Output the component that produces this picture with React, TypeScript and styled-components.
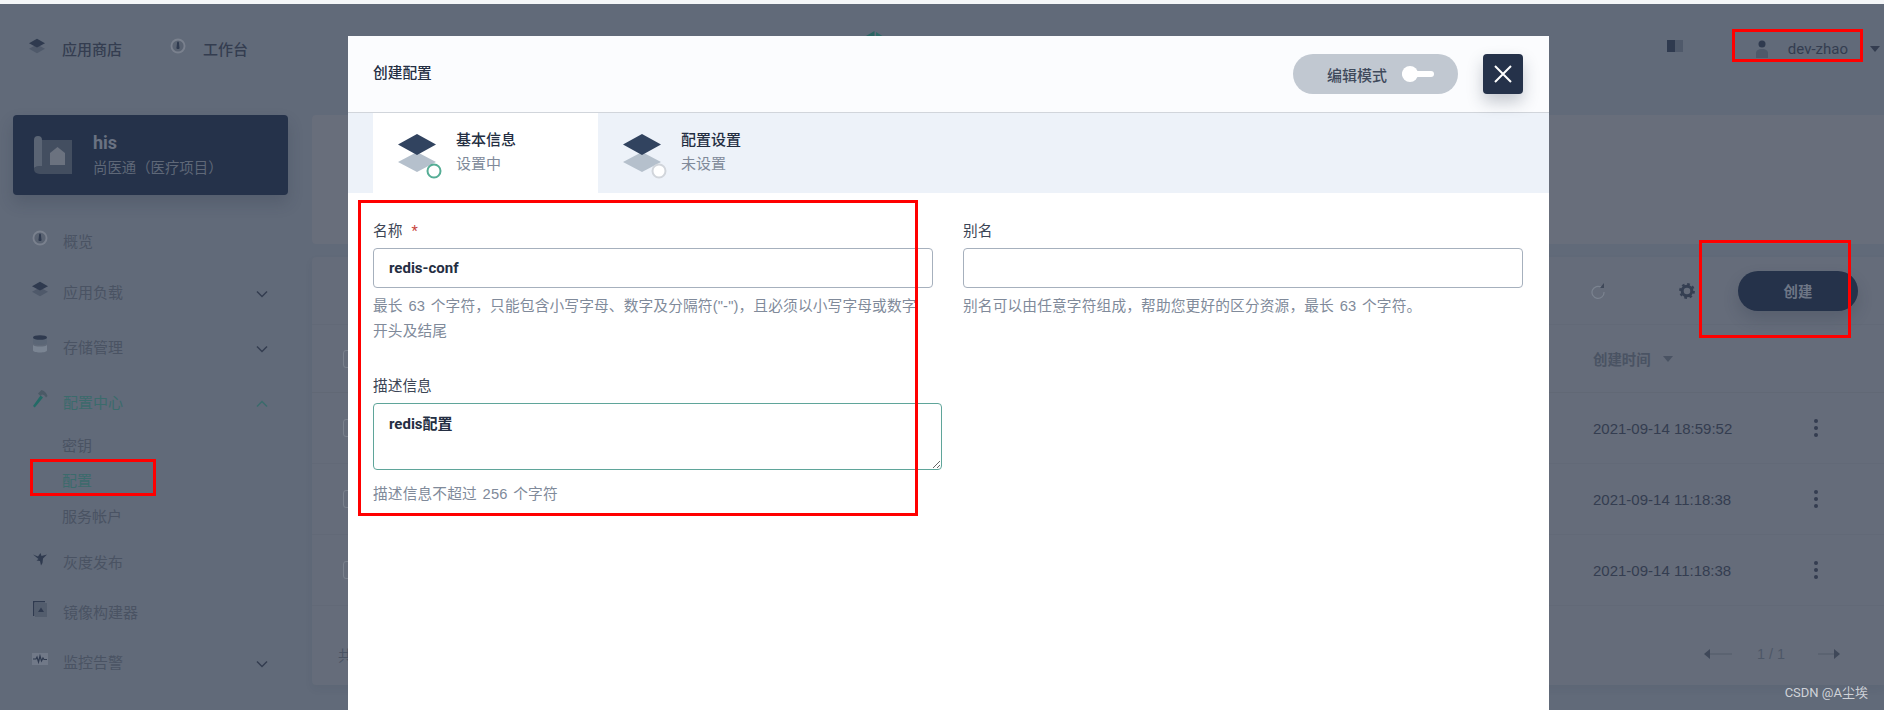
import React from 'react';
import styled, { createGlobalStyle } from 'styled-components';

const colors = {
    page: '#616a79',
    panel: '#686e7b',
    navy: '#25324a',
    ink: '#343d50',
    inkSoft: '#4a5363',
    teal: '#3b6b6c',
    red: '#ff0000',
    modalInk: '#242e42',
    modalHelp: '#808a9a',
    line: '#a6b0bd',
};

const GlobalStyle = createGlobalStyle`
    html, body {
        margin: 0;
        padding: 0;
        background: ${colors.page};
    }
    * {
        box-sizing: border-box;
    }
    body, input, textarea {
        font-family: Roboto, "Noto Sans CJK SC", sans-serif;
    }
`;

const Page = styled.div`
    position: relative;
    width: 1884px;
    height: 710px;
    overflow: hidden;
    background: ${colors.page};
    border-top: 4px solid #f4f6f8;
`;

const TopBar = styled.header`
    display: flex;
    align-items: center;
    height: 90px;
    padding: 0 0 0 29px;
    margin-bottom: 21px;
`;

const TopNav = styled.a`
    display: flex;
    align-items: center;
    gap: 17px;
    width: 141px;
    margin-top: -1px;
    font-size: 15px;
    font-weight: 500;
    color: ${colors.ink};
`;

const TopNavIcon = styled.span`
    display: flex;
    margin-top: -6px;
`;

const LogoMark = styled.div`
    display: flex;
    margin: -18px 0 0 555px;
`;

const TopRight = styled.div`
    display: flex;
    align-items: center;
    margin-left: auto;
    padding-right: 4px;
    font-size: 15px;
    color: ${colors.ink};
`;

const BookIcon = styled.span`
    display: flex;
    margin: -6px 72px 0 0;
`;

const UserName = styled.span`
    margin: 0 22px 0 19px;
`;

const Caret = styled.span`
    width: 0;
    height: 0;
    border-left: 5px solid transparent;
    border-right: 5px solid transparent;
    border-top: 6px solid ${colors.ink};
`;

const Body = styled.div`
    display: grid;
    grid-template-columns: 312px 1fr;
`;

const Sidebar = styled.aside`
    padding: 0 24px 0 13px;
`;

const ProjectCard = styled.div`
    display: flex;
    align-items: center;
    gap: 21px;
    height: 80px;
    padding-left: 21px;
    margin-bottom: 19px;
    background: ${colors.navy};
    border-radius: 4px;
    box-shadow: 0 8px 16px rgba(36, 46, 66, 0.2);
`;

const ProjectName = styled.div`
    font-size: 18px;
    font-weight: 700;
    line-height: 23px;
    color: #6a7282;
`;

const ProjectDesc = styled.div`
    margin-top: 4px;
    font-size: 14.4px;
    line-height: 22px;
    color: #5f6878;
`;

const MenuRow = styled.div<{ $h: number; $sub?: boolean; $active?: boolean }>`
    display: flex;
    align-items: center;
    height: ${(p) => p.$h}px;
    padding: 0 20px 0 ${(p) => (p.$sub ? 49 : 19)}px;
    font-size: 15px;
    color: ${(p) => (p.$active ? colors.teal : colors.inkSoft)};
`;

const MenuIcon = styled.span`
    display: flex;
    justify-content: center;
    width: 16px;
    margin-right: 15px;
    margin-top: -4px;
`;

const Chevron = styled.span`
    display: flex;
    margin-left: auto;
    margin-top: 6px;
`;

const Main = styled.main`
    display: flex;
    flex-direction: column;
    gap: 13px;
`;

const Banner = styled.div`
    height: 129px;
    background: ${colors.panel};
    border-radius: 4px 0 0 4px;
`;

const ListCard = styled.section`
    height: 428px;
    background: #656c7a;
    border-radius: 4px 0 0 4px;
    box-shadow: 0 4px 8px rgba(36, 46, 66, 0.06);
`;

const Toolbar = styled.div`
    display: flex;
    align-items: center;
    justify-content: flex-end;
    gap: 43px;
    height: 68px;
    padding-right: 26px;
    border-bottom: 1px solid #626977;
`;

const ToolIcon = styled.span`
    display: flex;
`;

const RefreshIcon = styled(ToolIcon)`
    margin-right: 31px;
`;

const CreateButton = styled.button`
    width: 120px;
    height: 40px;
    border: 0;
    border-radius: 20px;
    background: ${colors.navy};
    color: #6e7686;
    font-family: inherit;
    font-size: 14.4px;
    font-weight: 700;
    box-shadow: 0 8px 16px rgba(36, 46, 66, 0.2);
`;

const TableRow = styled.div<{ $head?: boolean }>`
    display: grid;
    grid-template-columns: 18px 1fr 213px 20px;
    align-items: center;
    height: ${(p) => (p.$head ? 68 : 71)}px;
    padding: 0 58px 0 31px;
    border-bottom: 1px solid ${(p) => (p.$head ? '#616875' : '#626977')};
    font-size: 14.4px;
    color: ${colors.ink};
`;

const Check = styled.span`
    width: 18px;
    height: 18px;
    border: 1px solid #7a818d;
    border-radius: 3px;
`;

const HeadCell = styled.span`
    grid-column: 3;
    display: flex;
    align-items: center;
    gap: 12px;
    font-weight: 700;
    color: ${colors.inkSoft};
`;

const HeadCaret = styled.span`
    width: 0;
    height: 0;
    border-left: 5px solid transparent;
    border-right: 5px solid transparent;
    border-top: 6px solid ${colors.inkSoft};
`;

const DateCell = styled.span`
    grid-column: 3;
    font-family: "Liberation Sans", Arial, sans-serif;
    font-size: 15px;
`;

const Dots = styled.span`
    display: flex;
    flex-direction: column;
    align-items: center;
    gap: 3px;
    & > i {
        width: 4px;
        height: 4px;
        border-radius: 50%;
        background: ${colors.ink};
    }
`;

const Pager = styled.div`
    display: flex;
    align-items: center;
    height: 80px;
    padding: 16px 44px 0 26px;
    font-size: 14.4px;
    color: ${colors.inkSoft};
`;

const PagerCount = styled.span`
    margin: 0 33px 0 25px;
    font-family: "Liberation Sans", Arial, sans-serif;
    color: #4d5767;
`;

const PagerArrows = styled.div`
    display: flex;
    align-items: center;
    margin-left: auto;
`;

const Modal = styled.div`
    position: absolute;
    top: 32px;
    left: 348px;
    width: 1201px;
    height: 680px;
    background: #ffffff;
    border-radius: 4px 4px 0 0;
`;

const ModalHead = styled.div`
    display: flex;
    align-items: center;
    height: 77px;
    padding: 0 26px 0 25px;
    background: #fbfcfe;
    border-bottom: 1px solid #d1d5db;
`;

const ModalTitle = styled.div`
    margin-top: -5px;
    font-size: 14.7px;
    font-weight: 500;
    color: ${colors.modalInk};
`;

const EditMode = styled.div`
    display: flex;
    align-items: center;
    gap: 15px;
    width: 165px;
    height: 40px;
    margin-left: auto;
    padding-left: 34px;
    background: #c1c8d1;
    border-radius: 20px;
    font-size: 15px;
    font-weight: 500;
    color: #3f4a5c;
`;

const Toggle = styled.span`
    position: relative;
    width: 32px;
    height: 6px;
    background: #ffffff;
    border-radius: 3px;
    &::before {
        content: '';
        position: absolute;
        left: 0;
        top: -5px;
        width: 16px;
        height: 16px;
        border-radius: 50%;
        background: #ffffff;
    }
`;

const CloseButton = styled.button`
    display: flex;
    align-items: center;
    justify-content: center;
    width: 40px;
    height: 40px;
    margin-left: 25px;
    padding: 0;
    border: 0;
    border-radius: 4px;
    background: ${colors.navy};
    box-shadow: 0 8px 16px rgba(36, 46, 66, 0.25);
`;

const Steps = styled.div`
    display: flex;
    height: 80px;
    padding-left: 25px;
    background: #edf2f9;
`;

const Step = styled.div<{ $current?: boolean }>`
    display: flex;
    align-items: center;
    gap: 20px;
    width: 225px;
    padding-left: 25px;
    background: ${(p) => (p.$current ? '#ffffff' : 'transparent')};
`;

const StepTitle = styled.div`
    margin-top: -2px;
    font-size: 15px;
    font-weight: 500;
    line-height: 24px;
    color: ${colors.modalInk};
`;

const StepSub = styled.div`
    font-size: 15px;
    line-height: 24px;
    color: ${colors.modalHelp};
`;

const StepGlyph = styled.svg`
    overflow: visible;
`;

const Form = styled.div`
    display: grid;
    grid-template-columns: 560px 560px;
    column-gap: 30px;
    align-items: start;
    padding: 28px 0 0 25px;
`;

const Field = styled.div<{ $top?: number }>`
    margin-top: ${(p) => p.$top ?? 0}px;
`;

const Label = styled.label`
    display: block;
    margin-bottom: 7px;
    font-size: 14.7px;
    line-height: 20px;
    color: #3c4555;
`;

const Required = styled.span`
    margin-left: 9px;
    color: #c8473f;
`;

const TextInput = styled.input`
    display: block;
    width: 560px;
    height: 40px;
    padding: 0 15px;
    border: 1px solid ${colors.line};
    border-radius: 4px;
    outline: none;
    font-size: 15px;
    font-weight: 700;
    color: ${colors.modalInk};
`;

const TextArea = styled.textarea`
    display: block;
    width: 569px;
    height: 67px;
    padding: 9px 15px;
    border: 1px solid #5fa59a;
    border-radius: 4px;
    outline: none;
    font-size: 15px;
    font-weight: 700;
    line-height: 22px;
    color: ${colors.modalInk};
`;

const Help = styled.div<{ $top?: number }>`
    margin-top: ${(p) => p.$top ?? 6}px;
    font-family: "Liberation Sans", "Noto Sans CJK SC", sans-serif;
    font-size: 14.7px;
    line-height: 25px;
    letter-spacing: 0.15px;
    word-spacing: 1.5px;
    white-space: nowrap;
    color: ${colors.modalHelp};
`;

const Mark = styled.div<{ $x: number; $y: number; $w: number; $h: number }>`
    position: absolute;
    left: ${(p) => p.$x}px;
    top: ${(p) => p.$y}px;
    width: ${(p) => p.$w}px;
    height: ${(p) => p.$h}px;
    border: 3px solid ${colors.red};
`;

const Watermark = styled.div`
    position: absolute;
    right: 16px;
    bottom: 9px;
    font-size: 13px;
    color: #cfd2d8;
`;

const LayersIcon = ({ top = '#2f3a4f', bottom = '#4f596a', size = 20 }: { top?: string; bottom?: string; size?: number }) => (
    <svg width={size} height={size} viewBox="0 0 20 20">
        <path d="M10 8 20 13.5 10 19 0 13.5Z" fill={bottom} />
        <path d="M10 1 20 6.5 10 12 0 6.5Z" fill={top} />
    </svg>
);

const GaugeIcon = () => (
    <svg width="16" height="16" viewBox="0 0 16 16">
        <circle cx="8" cy="8" r="7.5" fill="#7a818e" />
        <circle cx="8" cy="8" r="5.6" fill="#5a6372" />
        <path d="M7.2 3.8h1.6l.6 5.2a1.5 1.5 0 1 1-2.8 0Z" fill="#2f3a4f" />
    </svg>
);

const DatabaseIcon = () => (
    <svg width="14" height="18" viewBox="0 0 14 18">
        <path d="M0 3v5c0 1 3 2 7 2s7-1 7-2V3Z" fill="#5b6676" />
        <path d="M0 10v5.500c0 1 3 2 7 2s7-1 7-2V10c-1 1-4 1.600-7 1.600S1 11 0 10Z" fill="#7a8492" />
        <ellipse cx="7" cy="2.500" rx="7" ry="2.300" fill="#2f3a4f" />
    </svg>
);

const HammerIcon = () => (
    <svg width="16" height="18" viewBox="0 0 16 18">
        <path d="M8.500 5.500 1 16l1.800 1.500 8.200-10Z" fill="#236a66" />
        <path d="M6 3.500 9.500 0c2.500.5 5 2.500 6 6l-1.500 1.500c-1-1.800-2.500-3-4-3L8.500 6Z" fill="#4b5a66" />
    </svg>
);

const BirdIcon = () => (
    <svg width="14" height="14" viewBox="0 0 14 14">
        <path d="M0 2.500 5 4.500 7.500 1 8.500 4 14 2.500 10 6.500 9.500 11 8 13.500 7 9 3.500 8.500 5.500 7Z" fill="#2f3a4f" />
    </svg>
);

const ImageIcon = () => (
    <svg width="14" height="16" viewBox="0 0 14 16">
        <path d="M2 2h12v14H2Z" fill="#535d6d" />
        <path d="M0 0h12v1.300H1.300V15H0Z" fill="#2f3a4f" />
        <path d="M8 6.500 11 11H5Z" fill="#2f3a4f" />
    </svg>
);

const MonitorIcon = () => (
    <svg width="16" height="12" viewBox="0 0 16 12">
        <rect width="16" height="12" fill="#717988" />
        <path d="M1 6h3l1-2 1.500 5L8 3l1.500 5L11 5l1 1.500h3" fill="none" stroke="#2f3a4f" strokeWidth="1.200" />
    </svg>
);

const ChevronIcon = ({ up, color = colors.ink }: { up?: boolean; color?: string }) => (
    <svg width="12" height="8" viewBox="0 0 12 8">
        <path d={up ? 'M1 6.500 6 1.500l5 5' : 'M1 1.500l5 5 5-5'} fill="none" stroke={color} strokeWidth="1.500" />
    </svg>
);

const ProjectIcon = () => (
    <svg width="38" height="38" viewBox="0 0 38 38">
        <path d="M8 4h30v34H8C2 38 0 36 0 33c0-2 3-3 8-3Z" fill="#434e60" />
        <path d="M0 33V4a4 4 0 0 1 8 0v26c-5 0-8 1-8 3Z" fill="#5a6474" />
        <path d="M16 29V17l7.500-6 7.500 6v12Z" fill="#6b727f" />
    </svg>
);

const StepIcon = ({ ring, fill }: { ring: string; fill: string }) => (
    <StepGlyph width="38" height="40" viewBox="0 0 38 40">
        <path d="M19 19 38 29 19 39 0 29Z" fill="#b5c0cc" />
        <path d="M19 1 38 11.500 19 22 0 11.500Z" fill="#31435f" />
        <circle cx="36" cy="38" r="6.500" fill={fill} stroke={ring} strokeWidth="2" />
    </StepGlyph>
);

const menu = [
    { label: '概览', h: 52, Icon: GaugeIcon },
    { label: '应用负载', h: 50, Icon: () => <LayersIcon size={16} />, more: true },
    { label: '存储管理', h: 60, Icon: DatabaseIcon, more: true },
    { label: '配置中心', h: 50, Icon: HammerIcon, more: true, open: true },
    { label: '密钥', h: 36, sub: true },
    { label: '配置', h: 34, sub: true, active: true },
    { label: '服务帐户', h: 38, sub: true },
    { label: '灰度发布', h: 54, Icon: BirdIcon },
    { label: '镜像构建器', h: 46, Icon: ImageIcon },
    { label: '监控告警', h: 54, Icon: MonitorIcon, more: true },
];

const dates = ['2021-09-14 18:59:52', '2021-09-14 11:18:38', '2021-09-14 11:18:38'];

const App = () => {
    return (
        <Page>
            <GlobalStyle />
            <TopBar>
                <TopNav>
                    <TopNavIcon>
                        <LayersIcon size={16} />
                    </TopNavIcon>
                    应用商店
                </TopNav>
                <TopNav>
                    <TopNavIcon>
                        <GaugeIcon />
                    </TopNavIcon>
                    工作台
                </TopNav>
                <LogoMark>
                    <svg width="18" height="18" viewBox="0 0 18 18">
                        <path d="M8.500 0v18H0V5Z" fill="#2a6462" />
                        <path d="M10 1 18 6v12h-8Z" fill="#2f6a68" />
                    </svg>
                </LogoMark>
                <TopRight>
                    <BookIcon>
                        <svg width="16" height="12" viewBox="0 0 16 12">
                            <rect width="8" height="12" fill="#2f3a4f" />
                            <rect x="8" width="8" height="12" fill="#4f596a" />
                        </svg>
                    </BookIcon>
                    <svg width="14" height="18" viewBox="0 0 14 18">
                        <circle cx="7" cy="4" r="3.500" fill="#2f3a4f" />
                        <path d="M1 18v-5c0-2 2-4 6-4s6 2 6 4v5Z" fill="#4f596a" />
                    </svg>
                    <UserName>dev-zhao</UserName>
                    <Caret />
                </TopRight>
            </TopBar>
            <Body>
                <Sidebar>
                    <ProjectCard>
                        <ProjectIcon />
                        <div>
                            <ProjectName>his</ProjectName>
                            <ProjectDesc>尚医通（医疗项目）</ProjectDesc>
                        </div>
                    </ProjectCard>
                    {menu.map(({ label, h, Icon, more, open, sub, active }) => (
                        <MenuRow key={label} $h={h} $sub={sub} $active={active || open}>
                            {Icon && (
                                <MenuIcon>
                                    <Icon />
                                </MenuIcon>
                            )}
                            {label}
                            {more && (
                                <Chevron>
                                    <ChevronIcon up={open} color={open ? colors.teal : colors.ink} />
                                </Chevron>
                            )}
                        </MenuRow>
                    ))}
                </Sidebar>
                <Main>
                    <Banner />
                    <ListCard>
                        <Toolbar>
                            <RefreshIcon>
                                <svg width="14" height="16" viewBox="0 0 14 16">
                                    <path d="M10.500 4.500A6 6 0 1 0 13 9" fill="none" stroke="#7b8390" strokeWidth="1.200" />
                                    <path d="M9 5h4V0Z" fill="#3f4859" />
                                </svg>
                            </RefreshIcon>
                            <ToolIcon>
                                <svg width="16" height="16" viewBox="0 0 16 16">
                                    <circle cx="8" cy="8" r="4.800" fill="none" stroke="#353f52" strokeWidth="3" />
                                    <circle cx="8" cy="8" r="6.700" fill="none" stroke="#353f52" strokeWidth="2.400" strokeDasharray="2.600 2.660" />
                                </svg>
                            </ToolIcon>
                            <CreateButton>创建</CreateButton>
                        </Toolbar>
                        <TableRow $head>
                            <Check />
                            <HeadCell>
                                创建时间
                                <HeadCaret />
                            </HeadCell>
                        </TableRow>
                        {dates.map((date, i) => (
                            <TableRow key={i}>
                                <Check />
                                <DateCell>{date}</DateCell>
                                <Dots>
                                    <i />
                                    <i />
                                    <i />
                                </Dots>
                            </TableRow>
                        ))}
                        <Pager>
                            共 3 条
                            <PagerArrows>
                                <svg width="28" height="10" viewBox="0 0 28 10">
                                    <path d="M6 5h22" stroke="#58606f" strokeWidth="1.500" />
                                    <path d="M0 5l6-5v10Z" fill="#3f4859" />
                                </svg>
                                <PagerCount>1 / 1</PagerCount>
                                <svg width="22" height="10" viewBox="0 0 22 10">
                                    <path d="M0 5h16" stroke="#58606f" strokeWidth="1.500" />
                                    <path d="M22 5l-6-5v10Z" fill="#3f4859" />
                                </svg>
                            </PagerArrows>
                        </Pager>
                    </ListCard>
                </Main>
            </Body>

            <Modal>
                <ModalHead>
                    <ModalTitle>创建配置</ModalTitle>
                    <EditMode>
                        编辑模式
                        <Toggle />
                    </EditMode>
                    <CloseButton>
                        <svg width="20" height="20" viewBox="0 0 20 20">
                            <path d="M2 2l16 16M18 2 2 18" stroke="#ffffff" strokeWidth="2" />
                        </svg>
                    </CloseButton>
                </ModalHead>
                <Steps>
                    <Step $current>
                        <StepIcon ring="#55ad95" fill="#ffffff" />
                        <div>
                            <StepTitle>基本信息</StepTitle>
                            <StepSub>设置中</StepSub>
                        </div>
                    </Step>
                    <Step>
                        <StepIcon ring="#d1d5db" fill="#ffffff" />
                        <div>
                            <StepTitle>配置设置</StepTitle>
                            <StepSub>未设置</StepSub>
                        </div>
                    </Step>
                </Steps>
                <Form>
                    <Field>
                        <Label>
                            名称<Required>*</Required>
                        </Label>
                        <TextInput value="redis-conf" readOnly />
                        <Help>
                            最长 63 个字符，只能包含小写字母、数字及分隔符("-")，且必须以小写字母或数字
                            <br />
                            开头及结尾
                        </Help>
                    </Field>
                    <Field>
                        <Label>别名</Label>
                        <TextInput defaultValue="" />
                        <Help>别名可以由任意字符组成，帮助您更好的区分资源，最长 63 个字符。</Help>
                    </Field>
                    <Field $top={32}>
                        <Label>描述信息</Label>
                        <TextArea value="redis配置" readOnly />
                        <Help $top={12}>描述信息不超过 256 个字符</Help>
                    </Field>
                </Form>
            </Modal>

            <Mark $x={1732} $y={25} $w={131} $h={33} />
            <Mark $x={1699} $y={236} $w={152} $h={98} />
            <Mark $x={30} $y={455} $w={126} $h={37} />
            <Mark $x={358} $y={196} $w={560} $h={316} />
            <Watermark>CSDN @A尘埃</Watermark>
        </Page>
    );
};

export default App;
